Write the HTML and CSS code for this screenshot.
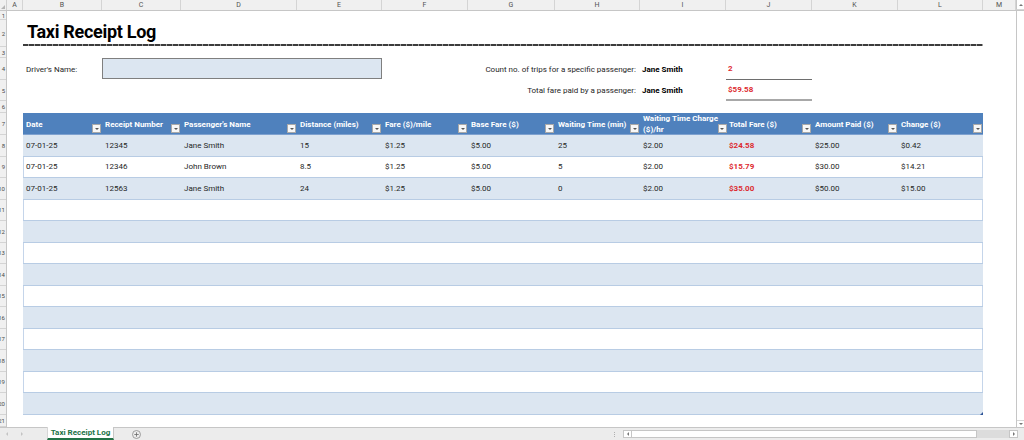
FILE: index.html
```html
<!DOCTYPE html>
<html>
<head>
<meta charset="utf-8">
<title>Taxi Receipt Log</title>
<link rel="stylesheet" href="styles.css">
</head>
<body>
<div class="app">
  <div class="colheads">
    <div class="corner"><span class="corner-tri"></span></div>
    <div class="ch">A</div><div class="ch">B</div><div class="ch">C</div><div class="ch">D</div>
    <div class="ch">E</div><div class="ch">F</div><div class="ch">G</div><div class="ch">H</div>
    <div class="ch">I</div><div class="ch">J</div><div class="ch">K</div><div class="ch">L</div>
    <div class="ch">M</div>
    <div class="vs-up"><span class="tri-up"></span></div>
  </div>
  <div class="main">
    <div class="rowheads">
      <div class="rh">1</div><div class="rh">2</div><div class="rh">3</div><div class="rh">4</div>
      <div class="rh">5</div><div class="rh">6</div><div class="rh">7</div><div class="rh">8</div>
      <div class="rh">9</div><div class="rh">10</div><div class="rh">11</div><div class="rh">12</div>
      <div class="rh">13</div><div class="rh">14</div><div class="rh">15</div><div class="rh">16</div>
      <div class="rh">17</div><div class="rh">18</div><div class="rh">19</div><div class="rh">20</div>
      <div class="rh">21</div>
    </div>
    <div class="sheet">
      <div class="title">Taxi Receipt Log</div>
      <div class="rule"></div>
      <div class="lbl-driver">Driver's Name:</div>
      <div class="driver-box"></div>
      <div class="q q1">Count no. of trips for a specific passenger:</div>
      <div class="qname q1">Jane Smith</div>
      <div class="qval q1 v1">2</div>
      <div class="q q2">Total fare paid by a passenger:</div>
      <div class="qname q2">Jane Smith</div>
      <div class="qval q2 v2">$59.58</div>

      <div class="table">
        <div class="tr thead">
          <div class="th"><span>Date</span><i class="fb"></i></div>
          <div class="th"><span>Receipt Number</span><i class="fb"></i></div>
          <div class="th"><span>Passenger's Name</span><i class="fb"></i></div>
          <div class="th"><span>Distance (miles)</span><i class="fb"></i></div>
          <div class="th"><span>Fare ($)/mile</span><i class="fb"></i></div>
          <div class="th"><span>Base Fare ($)</span><i class="fb"></i></div>
          <div class="th"><span>Waiting Time (min)</span><i class="fb"></i></div>
          <div class="th"><span>Waiting Time Charge<br>($)/hr</span><i class="fb"></i></div>
          <div class="th"><span>Total Fare ($)</span><i class="fb"></i></div>
          <div class="th"><span>Amount Paid ($)</span><i class="fb"></i></div>
          <div class="th"><span>Change ($)</span><i class="fb"></i></div>
        </div>
        <div class="tr band">
          <div class="td">07-01-25</div><div class="td">12345</div><div class="td">Jane Smith</div>
          <div class="td">15</div><div class="td">$1.25</div><div class="td">$5.00</div>
          <div class="td">25</div><div class="td">$2.00</div><div class="td red">$24.58</div>
          <div class="td">$25.00</div><div class="td">$0.42</div>
        </div>
        <div class="tr">
          <div class="td">07-01-25</div><div class="td">12346</div><div class="td">John Brown</div>
          <div class="td">8.5</div><div class="td">$1.25</div><div class="td">$5.00</div>
          <div class="td">5</div><div class="td">$2.00</div><div class="td red">$15.79</div>
          <div class="td">$30.00</div><div class="td">$14.21</div>
        </div>
        <div class="tr band">
          <div class="td">07-01-25</div><div class="td">12563</div><div class="td">Jane Smith</div>
          <div class="td">24</div><div class="td">$1.25</div><div class="td">$5.00</div>
          <div class="td">0</div><div class="td">$2.00</div><div class="td red">$35.00</div>
          <div class="td">$50.00</div><div class="td">$15.00</div>
        </div>
        <div class="tr"></div>
        <div class="tr band"></div>
        <div class="tr"></div>
        <div class="tr band"></div>
        <div class="tr"></div>
        <div class="tr band"></div>
        <div class="tr"></div>
        <div class="tr band"></div>
        <div class="tr"></div>
        <div class="tr band"></div>
        <span class="resize"></span>
      </div>
    </div>
    <div class="vscroll">
      <div class="vs-down"><span class="tri-down"></span></div>
    </div>
  </div>
  <div class="tabbar">
    <div class="nav"><span class="nav-l"></span><span class="nav-r"></span></div>
    <div class="tab">Taxi Receipt Log</div>
    <div class="plus">
      <svg width="9" height="9" viewBox="0 0 9 9"><circle cx="4.5" cy="4.5" r="4" fill="none" stroke="#8a8a8a" stroke-width="0.8"/><path d="M4.5 2.3v4.4M2.3 4.5h4.4" stroke="#6a6a6a" stroke-width="0.8"/></svg>
    </div>
    <div class="split"><i></i><i></i><i></i></div>
    <div class="hs">
      <div class="hbtn"><span class="tri-l"></span></div>
      <div class="thumb"></div>
      <div class="track"></div>
      <div class="hbtn"><span class="tri-r"></span></div>
    </div>
  </div>
</div>
</body>
</html>
```

FILE: styles.css
```css
* { box-sizing: border-box; margin: 0; padding: 0; }
html, body { width: 1024px; height: 440px; overflow: hidden; background: #fff; }
body { font-family: Roboto, "Liberation Sans", Arial, sans-serif; color: #262626; }

.app { display: flex; flex-direction: column; width: 1024px; height: 440px; }

/* column headers */
.colheads {
  flex: none; height: 11px; display: grid;
  grid-template-columns: 7px 16px 79px 79px 116px 85px 86px 87px 85px 86px 86px 86px 85px 33px 8px;
  background: #f0f0f0; border-bottom: 1px solid #c6c6c6;
}
.corner { position: relative; border-right: 1px solid #d0d0d0; }
.corner-tri { position: absolute; right: 1px; bottom: 1px; width: 0; height: 0;
  border-left: 4px solid transparent; border-bottom: 4px solid #b5b5b5; }
.ch { border-right: 1px solid #d4d4d4; font-size: 7px; line-height: 10px; text-align: center; color: #505050; }
.vs-up { background: #fff; border-left: 1px solid #c6c6c6; border-bottom: 1px solid #d6d6d6;
  display: flex; align-items: center; justify-content: center; }
.tri-up { width: 0; height: 0; border-left: 2px solid transparent; border-right: 2px solid transparent; border-bottom: 2px solid #777; }

/* main area */
.main { flex: 1; min-height: 0; display: flex; }
.rowheads {
  flex: none; width: 7px; display: grid; background: #f0f0f0; border-right: 1px solid #c6c6c6;
  grid-template-rows: 9px 27px 11px 22px 21px 12px 22px repeat(13, 21.5px) 1fr;
}
.rh { display: flex; justify-content: flex-end; align-items: center; overflow: hidden;
  font-size: 6px; color: #4a4a4a; border-bottom: 1px solid #d4d4d4; padding-right: 1px; }

.sheet {
  flex: none; width: 1009px; display: grid;
  grid-template-columns: 16px 79px 79px 116px 85px 86px 87px 85px 86px 86px 86px 85px 33px;
  grid-template-rows: 9px 27px 11px 22px 21px 12px 22px repeat(13, 21.5px) 1fr;
  font-size: 8px;
}
.title { grid-column: 2 / 8; grid-row: 2; align-self: start; padding-left: 4px; padding-top: 1px;
  font-size: 18px; letter-spacing: -0.3px; line-height: 22px; font-weight: 700; color: #000; }
.rule { grid-column: 2 / 13; grid-row: 2; align-self: end; height: 2px; margin-bottom: 1px;
  background: repeating-linear-gradient(90deg, #3c3c3c 0 5px, #a0a0a0 5px 6px); }
.lbl-driver { grid-column: 2; grid-row: 4; align-self: center; padding-left: 3px; white-space: nowrap; }
.driver-box { grid-column: 3 / 6; grid-row: 4; margin-bottom: 1px; background: #dce6f1; border: 1px solid #7f7f7f; }
.q1 { grid-row: 4; }
.q2 { grid-row: 5; }
.q { grid-column: 6 / 9; align-self: center; text-align: right; padding-right: 4px; white-space: nowrap; }
.qname { grid-column: 9; align-self: center; padding-left: 2px; font-weight: 700; color: #000; white-space: nowrap; }
.qval { grid-column: 10; display: flex; align-items: center; padding-left: 2px; font-weight: 700; color: #dd2a2f; }
.v1 { border-bottom: 1px solid #6e6e6e; }
.v2 { border-bottom: 2px solid #a8a8a8; }

/* table */
.table { grid-column: 2 / 13; grid-row: 7 / 21; display: flex; flex-direction: column; position: relative;
  box-shadow: inset 1px 0 0 #c5d5ea, inset -1px 0 0 #c5d5ea; }
.tr { display: grid; flex: none; height: 21.5px;
  grid-template-columns: 79px 79px 116px 85px 86px 87px 85px 86px 86px 86px 85px;
  border-bottom: 1px solid #b8cce4; }
.band { background: #dce6f1; }
.thead { height: 22px; background: #4f81bd; border-bottom: 1px solid #7ea1cf; }
.th { display: flex; align-items: center; padding-left: 3px; color: #fff; font-weight: 700; font-size: 8px; line-height: 11px; white-space: nowrap; }
.th span { flex: 1; }
.fb { flex: none; align-self: flex-end; width: 9px; height: 9px; margin: 0 1px 2px 0; background: #f7f7f7;
  border: 1px solid #a9a9a9; display: flex; align-items: center; justify-content: center; }
.fb::after { content: ""; width: 0; height: 0; border-left: 2px solid transparent; border-right: 2px solid transparent; border-top: 2px solid #555; }
.td { display: flex; align-items: center; padding-left: 3px; white-space: nowrap; }
.red { color: #dd2a2f; font-weight: 700; }
.resize { position: absolute; right: 0; bottom: 0; width: 0; height: 0;
  border-left: 3px solid transparent; border-bottom: 3px solid #2f5597; }

/* vertical scrollbar */
.vscroll { flex: none; width: 8px; background: #fff; border-left: 1px solid #c6c6c6;
  display: flex; flex-direction: column; justify-content: flex-end; }
.vs-down { height: 7px; border-top: 1px solid #d6d6d6; display: flex; align-items: center; justify-content: center; }
.tri-down { width: 0; height: 0; border-left: 2px solid transparent; border-right: 2px solid transparent; border-top: 2px solid #777; }

/* tab bar */
.tabbar { flex: none; height: 13px; display: flex; align-items: stretch; background: #ececec; border-top: 1px solid #c6c6c6; }
.nav { width: 47px; display: flex; align-items: center; gap: 13px; padding-left: 6px; }
.nav-l { width: 0; height: 0; border-top: 2px solid transparent; border-bottom: 2px solid transparent; border-right: 2px solid #c4c4c4; }
.nav-r { width: 0; height: 0; border-top: 2px solid transparent; border-bottom: 2px solid transparent; border-left: 2px solid #c4c4c4; }
.tab { width: 67px; margin-top: -1px; background: #fff; border-right: 1px solid #c6c6c6; border-left: 1px solid #d6d6d6;
  border-bottom: 2px solid #217346; color: #217346; font-weight: 700; font-size: 8px; line-height: 11px; text-align: center; }
.plus { margin-left: 18px; display: flex; align-items: center; }
.plus svg { display: block; }
.split { margin-left: auto; display: flex; flex-direction: column; justify-content: center; gap: 1px; }
.split i { display: block; width: 1px; height: 1px; background: #b0b0b0; }
.hs { margin-left: 8px; margin-right: 6px; align-self: center; width: 395px; height: 8px; display: flex; }
.hbtn { flex: none; width: 9px; background: #fff; border: 1px solid #c6c6c6; display: flex; align-items: center; justify-content: center; }
.tri-l { width: 0; height: 0; border-top: 2px solid transparent; border-bottom: 2px solid transparent; border-right: 2px solid #777; }
.tri-r { width: 0; height: 0; border-top: 2px solid transparent; border-bottom: 2px solid transparent; border-left: 2px solid #777; }
.thumb { flex: none; width: 345px; background: #fff; border: 1px solid #c6c6c6; border-left: none; }
.track { flex: 1; background: #dcdcdc; }
```
